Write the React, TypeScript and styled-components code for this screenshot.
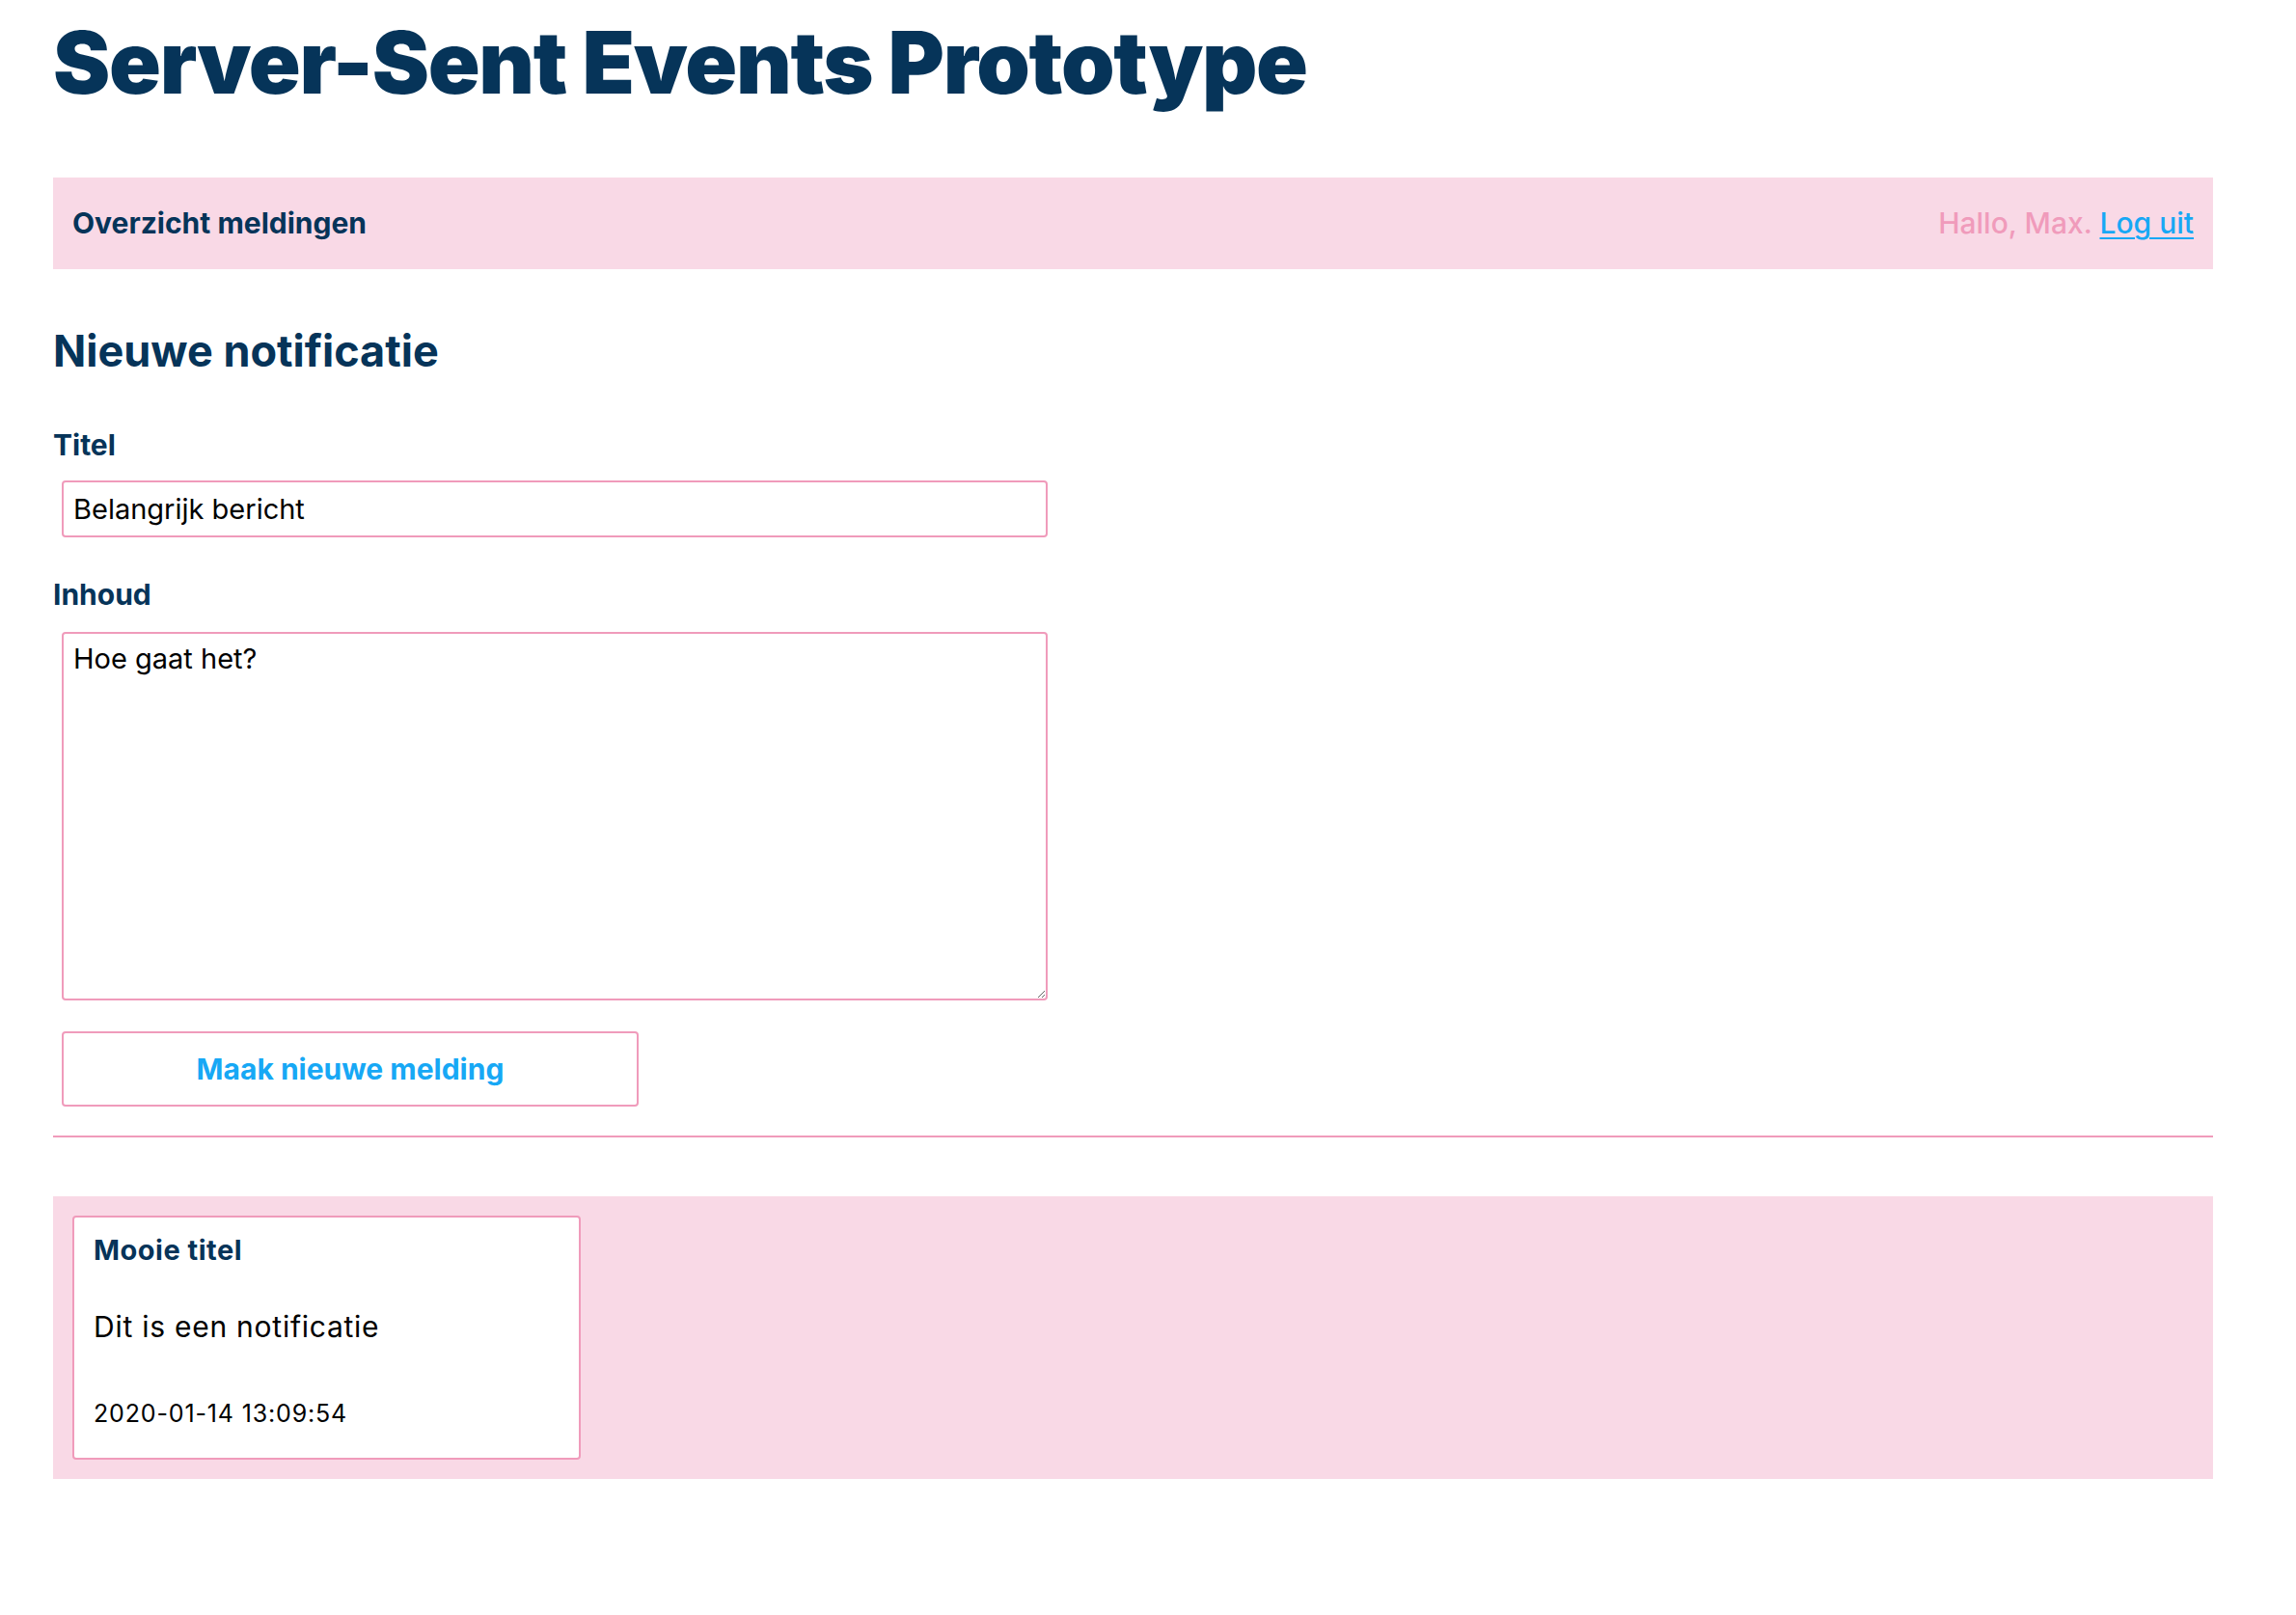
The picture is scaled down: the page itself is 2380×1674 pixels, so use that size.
import React from "react";
import styled, { createGlobalStyle } from "styled-components";

const navy = "#063459";
const pink = "#f09bbb";
const pinkBg = "#f9d9e6";
const blue = "#17a8f5";
const font = `Inter, Lato, "Noto Sans", sans-serif`;

const Global = createGlobalStyle`
  html, body { margin: 0; padding: 0; background: #ffffff; }
  body { font-family: ${font}; }
  * { box-sizing: border-box; }
`;

const Page = styled.div`
  width: 2239px;
  margin-left: 55px;
  display: flex;
  flex-direction: column;
`;

const Title = styled.h1`
  margin: 12px 0 0;
  font-size: 89px;
  line-height: 1.2;
  font-weight: 900;
  letter-spacing: -1.3px;
  color: ${navy};
`;

const NavBar = styled.nav`
  margin-top: 65px;
  height: 95px;
  padding: 0 20px;
  background: ${pinkBg};
  display: flex;
  align-items: center;
  justify-content: space-between;
  font-size: 30px;
  line-height: 1.2;
`;

const NavTitle = styled.span`
  font-weight: 700;
  color: ${navy};
`;

const Greeting = styled.span`
  font-weight: 500;
  color: ${pink};
`;

const Link = styled.a`
  font-weight: 500;
  color: ${blue};
  text-decoration: underline;
  text-decoration-thickness: 2px;
  text-underline-offset: 4px;
`;

const Heading = styled.h2`
  margin: 58px 0 0;
  font-size: 45px;
  line-height: 1.2;
  font-weight: 700;
  color: ${navy};
`;

const Form = styled.form`
  display: flex;
  flex-direction: column;
  align-items: flex-start;
`;

const Label = styled.label<{ $top: number }>`
  margin-top: ${(p) => p.$top}px;
  font-size: 30px;
  line-height: 1.2;
  font-weight: 700;
  color: ${navy};
`;

const fieldBase = `
  margin-left: 9px;
  width: 1022px;
  border: 2px solid ${pink};
  border-radius: 4px;
  font-family: ${font};
  font-size: 29px;
  line-height: 1.2;
  color: #000;
  background: #fff;
  padding: 9px 10px;
  outline: none;
`;

const TextInput = styled.input`
  ${fieldBase}
  margin-top: 19px;
  height: 59px;
`;

const TextArea = styled.textarea`
  ${fieldBase}
  margin-top: 21px;
  height: 382px;
  resize: both;
`;

const SubmitButton = styled.button`
  margin: 32px 0 0 9px;
  width: 598px;
  height: 78px;
  border: 2px solid ${pink};
  border-radius: 4px;
  background: #fff;
  color: ${blue};
  font-family: ${font};
  font-weight: 700;
  font-size: 30px;
  line-height: 1.2;
  cursor: pointer;
`;

const Divider = styled.hr`
  margin: 30px 0 0;
  border: none;
  height: 2px;
  background: ${pink};
`;

const Feed = styled.section`
  margin-top: 61px;
  padding: 20px;
  background: ${pinkBg};
  display: flex;
  gap: 20px;
`;

const Card = styled.article`
  width: 527px;
  height: 253px;
  background: #fff;
  border: 2px solid ${pink};
  border-radius: 4px;
  padding: 17px 20px 0;
  display: flex;
  flex-direction: column;
`;

const CardTitle = styled.h3`
  margin: 0;
  font-size: 29px;
  line-height: 1.2;
  font-weight: 700;
  letter-spacing: 0.5px;
  color: ${navy};
`;

const CardBody = styled.p`
  margin: 43px 0 0;
  font-size: 30px;
  line-height: 1.2;
  letter-spacing: 0.75px;
  color: #000;
`;

const CardDate = styled.time`
  margin-top: 57px;
  font-size: 25px;
  line-height: 1.2;
  letter-spacing: 0.85px;
  color: #000;
`;

export default function App() {
  return (
    <>
      <Global />
      <Page>
        <Title>Server-Sent Events Prototype</Title>
        <NavBar>
          <NavTitle>Overzicht meldingen</NavTitle>
          <span>
            <Greeting>Hallo, Max. </Greeting>
            <Link href="#">Log uit</Link>
          </span>
        </NavBar>
        <Heading>Nieuwe notificatie</Heading>
        <Form onSubmit={(e) => e.preventDefault()}>
          <Label $top={52} htmlFor="titel">Titel</Label>
          <TextInput id="titel" defaultValue="Belangrijk bericht" />
          <Label $top={41} htmlFor="inhoud">Inhoud</Label>
          <TextArea id="inhoud" defaultValue="Hoe gaat het?" />
          <SubmitButton type="submit">Maak nieuwe melding</SubmitButton>
        </Form>
        <Divider />
        <Feed>
          <Card>
            <CardTitle>Mooie titel</CardTitle>
            <CardBody>Dit is een notificatie</CardBody>
            <CardDate>2020-01-14 13:09:54</CardDate>
          </Card>
        </Feed>
      </Page>
    </>
  );
}
